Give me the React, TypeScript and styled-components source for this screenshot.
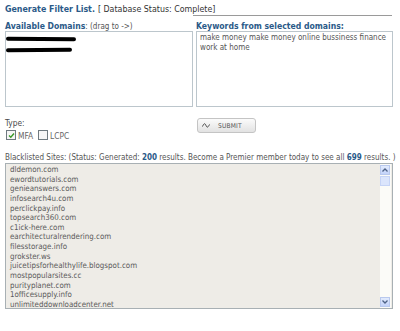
import React from "react";
import styled, { createGlobalStyle } from "styled-components";

const GlobalStyle = createGlobalStyle`
  html, body {
    margin: 0;
    padding: 0;
    background: #ffffff;
  }
  body {
    font-family: "DejaVu Sans Condensed", "DejaVu Sans", Tahoma, sans-serif;
    font-size: 8px;
    color: #4a4a4a;
  }
`;

const Page = styled.div`
  width: 400px;
  height: 331px;
  padding: 3px 7px 0 5px;
  box-sizing: border-box;
`;

const TitleRow = styled.div`
  display: flex;
  align-items: center;
  gap: 3px;
  height: 11px;
  font-size: 8.8px;
`;

const Title = styled.span`
  font-weight: bold;
  color: #2b5a88;
  white-space: nowrap;
`;

const Status = styled.span`
  color: #333;
  white-space: nowrap;
`;

const Rule = styled.div`
  height: 1px;
  margin: 1px 1px 0 188px;
  background: #9a9a9a;
`;

const Columns = styled.div`
  display: grid;
  grid-template-columns: 188px 197px;
  column-gap: 3px;
  margin-top: 5px;
`;

const Label = styled.div`
  height: 10px;
  line-height: 10px;
  white-space: nowrap;
  color: #555;
`;

const Strong = styled.span`
  font-weight: bold;
  color: #2b5a88;
`;

const LabelStrong = styled(Strong)`
  font-size: 8.6px;
`;

const Box = styled.div`
  height: 76px;
  box-sizing: border-box;
  border: 1px solid #bcc6cc;
  background: #fff;
  padding: 1px 3px;
  color: #555;
  line-height: 10px;
`;

const Redaction = styled.div<{ $w: number; $rot: number }>`
  width: ${(p) => p.$w}px;
  height: 4px;
  margin: 4px 0 7px -3px;
  background: #000;
  border-radius: 2px;
  transform: rotate(${(p) => p.$rot}deg);
`;

const Options = styled.div`
  display: grid;
  grid-template-columns: 188px 197px;
  column-gap: 3px;
  margin-top: 11px;
  height: 27px;
`;

const TypeBlock = styled.div`
  display: flex;
  flex-direction: column;
  gap: 1px;
  font-size: 8.3px;
`;

const ChoiceRow = styled.div`
  display: flex;
  align-items: center;
  gap: 2px;
`;

const Check = styled.span`
  display: inline-flex;
  align-items: center;
  justify-content: center;
  width: 10px;
  height: 10px;
  box-sizing: border-box;
  border: 1px solid #6f7a80;
  background: #f6f6f6;
  margin-left: 1px;
`;

const ChoiceText = styled.span`
  color: #666;
  margin-right: 2px;
  margin-top: 2px;
`;

const SubmitButton = styled.button`
  display: flex;
  align-items: center;
  gap: 8px;
  width: 59px;
  height: 15px;
  margin-left: 1px;
  padding: 0 0 0 4px;
  border: 1px solid #c4c4c4;
  border-radius: 3px;
  background: linear-gradient(#fbfbfb, #e2e2e2);
  font-family: "DejaVu Sans Condensed", "DejaVu Sans", sans-serif;
  font-size: 6.6px;
  color: #555;
  letter-spacing: 0.2px;
`;

const ListHeader = styled.div`
  margin-top: 7px;
  height: 11px;
  line-height: 11px;
  white-space: nowrap;
  color: #555;
`;

const ListBox = styled.div`
  position: relative;
  height: 146px;
  box-sizing: border-box;
  border: 1px solid #a8b0b4;
  background: #eeece7;
  padding: 1px 0 0 4px;
  font-size: 7.9px;
`;

const Item = styled.div`
  height: 9.65px;
  line-height: 9.65px;
  color: #5a5a5a;
`;

const ScrollTrack = styled.div`
  position: absolute;
  top: 0;
  right: 1px;
  bottom: 0;
  width: 11px;
  background: #fbfbf8;
  display: flex;
  flex-direction: column;
  justify-content: space-between;
  padding: 1px 0;
  box-sizing: border-box;
`;

const ScrollButton = styled.div`
  width: 10px;
  height: 10px;
  box-sizing: border-box;
  border: 1px solid #b9c9ee;
  background: linear-gradient(#e2ebfd, #c3d3fa);
  display: flex;
  align-items: center;
  justify-content: center;
`;

const Thumb = styled.div`
  width: 10px;
  height: 10px;
  box-sizing: border-box;
  border: 1px solid #c6d4f6;
  background: #dbe5fc;
`;

const TopGroup = styled.div`
  display: flex;
  flex-direction: column;
  gap: 1px;
`;

const sites = [
  "dldemon.com",
  "ewordtutorials.com",
  "genieanswers.com",
  "infosearch4u.com",
  "perclickpay.info",
  "topsearch360.com",
  "c1ick-here.com",
  "earchitecturalrendering.com",
  "filesstorage.info",
  "grokster.ws",
  "juicetipsforhealthylife.blogspot.com",
  "mostpopularsites.cc",
  "purityplanet.com",
  "1officesupply.info",
  "unlimiteddownloadcenter.net",
];

const Arrow = ({ up }: { up?: boolean }) => (
  <svg width="6" height="4" viewBox="0 0 6 4">
    <path
      d={up ? "M0.5 3.5 L3 1 L5.5 3.5" : "M0.5 0.5 L3 3 L5.5 0.5"}
      stroke="#4d6185"
      strokeWidth="1.3"
      fill="none"
    />
  </svg>
);

export default function App() {
  return (
    <Page>
      <GlobalStyle />
      <TitleRow>
        <Title>Generate Filter List.</Title>
        <Status>[ Database Status: Complete]</Status>
      </TitleRow>
      <Rule />

      <Columns>
        <div>
          <Label>
            <LabelStrong>Available Domains</LabelStrong>: (drag to -&gt;)
          </Label>
          <Box>
            <Redaction $w={70} $rot={0.5} />
            <Redaction $w={66} $rot={-0.5} />
          </Box>
        </div>
        <div>
          <Label>
            <LabelStrong>Keywords from selected domains:</LabelStrong>
          </Label>
          <Box>
            make money make money online bussiness finance work at home
          </Box>
        </div>
      </Columns>

      <Options>
        <TypeBlock>
          <span>Type:</span>
          <ChoiceRow>
            <Check>
              <svg width="7" height="7" viewBox="0 0 7 7">
                <path d="M1 3.5 L2.8 5.3 L6 1.5" stroke="#3a9a2a" strokeWidth="1.4" fill="none" />
              </svg>
            </Check>
            <ChoiceText>MFA</ChoiceText>
            <Check />
            <ChoiceText>LCPC</ChoiceText>
          </ChoiceRow>
        </TypeBlock>
        <div>
          <SubmitButton>
            <svg width="8" height="5" viewBox="0 0 8 5">
              <path d="M0.5 3.5 C2 0, 3 0, 4 2.5 S6 4.5, 7.5 1.5" stroke="#444" strokeWidth="1" fill="none" />
            </svg>
            SUBMIT
          </SubmitButton>
        </div>
      </Options>

      <ListHeader>
        Blacklisted Sites: (Status: Generated: <Strong>200</Strong> results. Become a
        Premier member today to see all <Strong>699</Strong> results. )
      </ListHeader>
      <ListBox>
        {sites.map((s) => (
          <Item key={s}>{s}</Item>
        ))}
        <ScrollTrack>
          <TopGroup>
            <ScrollButton>
              <Arrow up />
            </ScrollButton>
            <Thumb />
          </TopGroup>
          <ScrollButton>
            <Arrow />
          </ScrollButton>
        </ScrollTrack>
      </ListBox>
    </Page>
  );
}
